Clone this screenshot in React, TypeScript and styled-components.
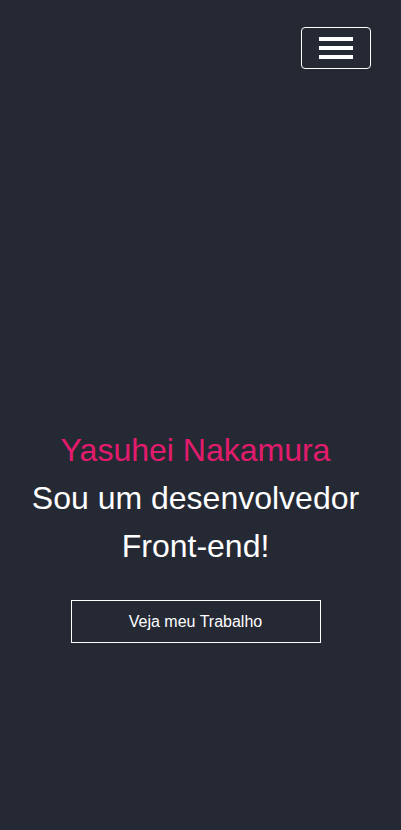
import React from "react";
import styled, { createGlobalStyle } from "styled-components";

const Global = createGlobalStyle`
  html, body { margin: 0; padding: 0; background: #252934; }
  body { font-family: "Liberation Sans", Arial, sans-serif; }
  * { box-sizing: border-box; }
`;

const Page = styled.div`
  min-height: 830px;
  background: #252934;
  display: flex;
  flex-direction: column;
`;

const Header = styled.header`
  display: flex;
  justify-content: flex-end;
  padding: 27px 30px 0 0;
`;

const MenuButton = styled.button`
  width: 70px;
  height: 42px;
  border: 1px solid #ffffff;
  border-radius: 4px;
  background: transparent;
  display: flex;
  flex-direction: column;
  align-items: center;
  justify-content: center;
  gap: 5px;
  padding: 0;
  cursor: pointer;
`;

const Bar = styled.span`
  display: block;
  width: 34px;
  height: 4px;
  background: #ffffff;
`;

const Hero = styled.section`
  display: flex;
  flex-direction: column;
  align-items: center;
  padding: 357px 10px 0 0;
  text-align: center;
`;

const Title = styled.h1`
  margin: 0;
  font-size: 32px;
  line-height: 48px;
  font-weight: 400;
  color: #ffffff;
`;

const Name = styled.span`
  color: #e31b6d;
`;

const CTA = styled.button`
  margin-top: 30px;
  width: 250px;
  height: 43px;
  border: 1px solid #ffffff;
  background: transparent;
  color: #ffffff;
  font-family: "Liberation Sans", Arial, sans-serif;
  font-size: 16px;
  cursor: pointer;
`;

export default function App() {
  return (
    <Page>
      <Global />
      <Header>
        <MenuButton aria-label="Menu">
          <Bar />
          <Bar />
          <Bar />
        </MenuButton>
      </Header>
      <Hero>
        <Title>
          <Name>Yasuhei Nakamura</Name>
          <br />
          Sou um desenvolvedor
          <br />
          Front-end!
        </Title>
        <CTA>Veja meu Trabalho</CTA>
      </Hero>
    </Page>
  );
}
